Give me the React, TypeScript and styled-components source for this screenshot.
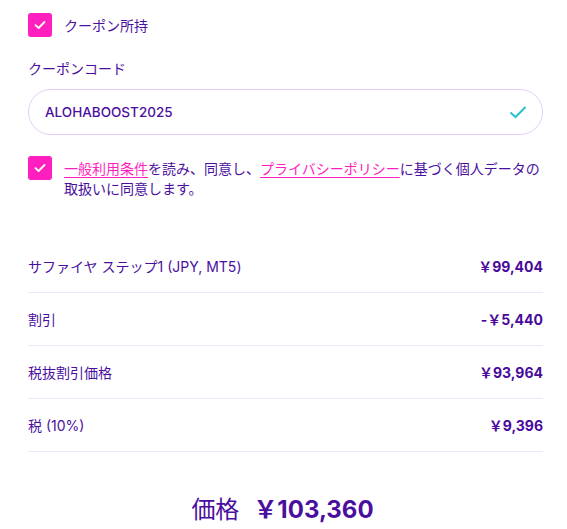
import React from "react";
import styled, { createGlobalStyle } from "styled-components";

const Global = createGlobalStyle`
  html, body { margin: 0; padding: 0; background: #ffffff; }
  body { font-family: "Inter", "Noto Sans CJK JP", sans-serif; color: #4b0f9f; }
`;

const Page = styled.div`
  width: 567px;
  padding: 13px 24px 0 28px;
  box-sizing: border-box;
  display: flex;
  flex-direction: column;
`;

const CheckRow = styled.label<{ $top?: number }>`
  display: flex;
  align-items: flex-start;
  gap: 12px;
  margin-top: ${(p) => p.$top ?? 0}px;
  font-size: 14px;
  line-height: 20px;
`;

const Box = styled.span`
  flex: 0 0 24px;
  width: 24px;
  height: 24px;
  border-radius: 3px;
  background: #ff1ebe;
  display: flex;
  align-items: center;
  justify-content: center;
`;

const CheckText = styled.span<{ $pad?: number }>`
  padding-top: ${(p) => p.$pad ?? 2}px;
  font-family: "Noto Sans CJK JP", sans-serif;
  color: #4b0f9f;
`;

const Link = styled.a`
  color: #ff1ebe;
  text-decoration: underline;
  text-underline-offset: 3px;
`;

const FieldLabel = styled.div`
  margin-top: 21px;
  font-family: "Noto Sans CJK JP", sans-serif;
  font-size: 14px;
  line-height: 20px;
`;

const InputWrap = styled.div`
  margin-top: 11px;
  height: 46px;
  width: 515px;
  box-sizing: border-box;
  border: 1px solid #e4cdf8;
  border-radius: 23px;
  display: flex;
  align-items: center;
  padding: 0 14px 0 16px;
`;

const InputText = styled.span`
  flex: 1;
  font-size: 13.5px;
  font-weight: 500;
  color: #4b0f9f;
`;

const List = styled.div`
  margin-top: 42px;
  width: 515px;
  display: flex;
  flex-direction: column;
`;

const Row = styled.div`
  height: 53px;
  box-sizing: border-box;
  border-bottom: 1px solid #f0e6fb;
  display: flex;
  align-items: center;
  justify-content: space-between;
  font-size: 14px;
`;

const RowLabel = styled.span`
  font-family: "Inter", "Noto Sans CJK JP", sans-serif;
  color: #4b0f9f;
`;

const Amount = styled.span`
  font-weight: 700;
  color: #4a0a9c;
`;

const Total = styled.div`
  margin-top: 38px;
  display: flex;
  justify-content: center;
  align-items: baseline;
  gap: 14px;
  font-size: 24px;
  color: #4b0f9f;
  padding-right: 6px;
`;

const TotalLabel = styled.span`
  font-family: "Noto Sans CJK JP", sans-serif;
`;

const TotalValue = styled.span`
  font-weight: 700;
`;

const Tick = () => (
  <svg width="14" height="14" viewBox="0 0 14 14" fill="none">
    <path d="M2.5 7.2 L5.6 10 L11.5 4" stroke="#fff" strokeWidth="1.8" strokeLinecap="round" strokeLinejoin="round" />
  </svg>
);

const rows: [string, string][] = [
  ["サファイヤ ステップ1 (JPY, MT5)", "￥99,404"],
  ["割引", "-￥5,440"],
  ["税抜割引価格", "￥93,964"],
  ["税 (10%)", "￥9,396"],
];

export default function App() {
  return (
    <Page>
      <Global />
      <CheckRow>
        <Box><Tick /></Box>
        <CheckText $pad={2}>クーポン所持</CheckText>
      </CheckRow>
      <FieldLabel>クーポンコード</FieldLabel>
      <InputWrap>
        <InputText>ALOHABOOST2025</InputText>
        <svg width="20" height="20" viewBox="0 0 20 20" fill="none">
          <path d="M2.5 10.5 L7.5 15 L17.5 5" stroke="#2cc0d0" strokeWidth="2" />
        </svg>
      </InputWrap>
      <CheckRow $top={21}>
        <Box><Tick /></Box>
        <CheckText $pad={2}>
          <Link>一般利用条件</Link>を読み、同意し、<Link>プライバシーポリシー</Link>に基づく個人データの取扱いに同意します。
        </CheckText>
      </CheckRow>
      <List>
        {rows.map(([l, a]) => (
          <Row key={l}>
            <RowLabel>{l}</RowLabel>
            <Amount>{a}</Amount>
          </Row>
        ))}
      </List>
      <Total>
        <TotalLabel>価格</TotalLabel>
        <TotalValue>￥103,360</TotalValue>
      </Total>
    </Page>
  );
}
